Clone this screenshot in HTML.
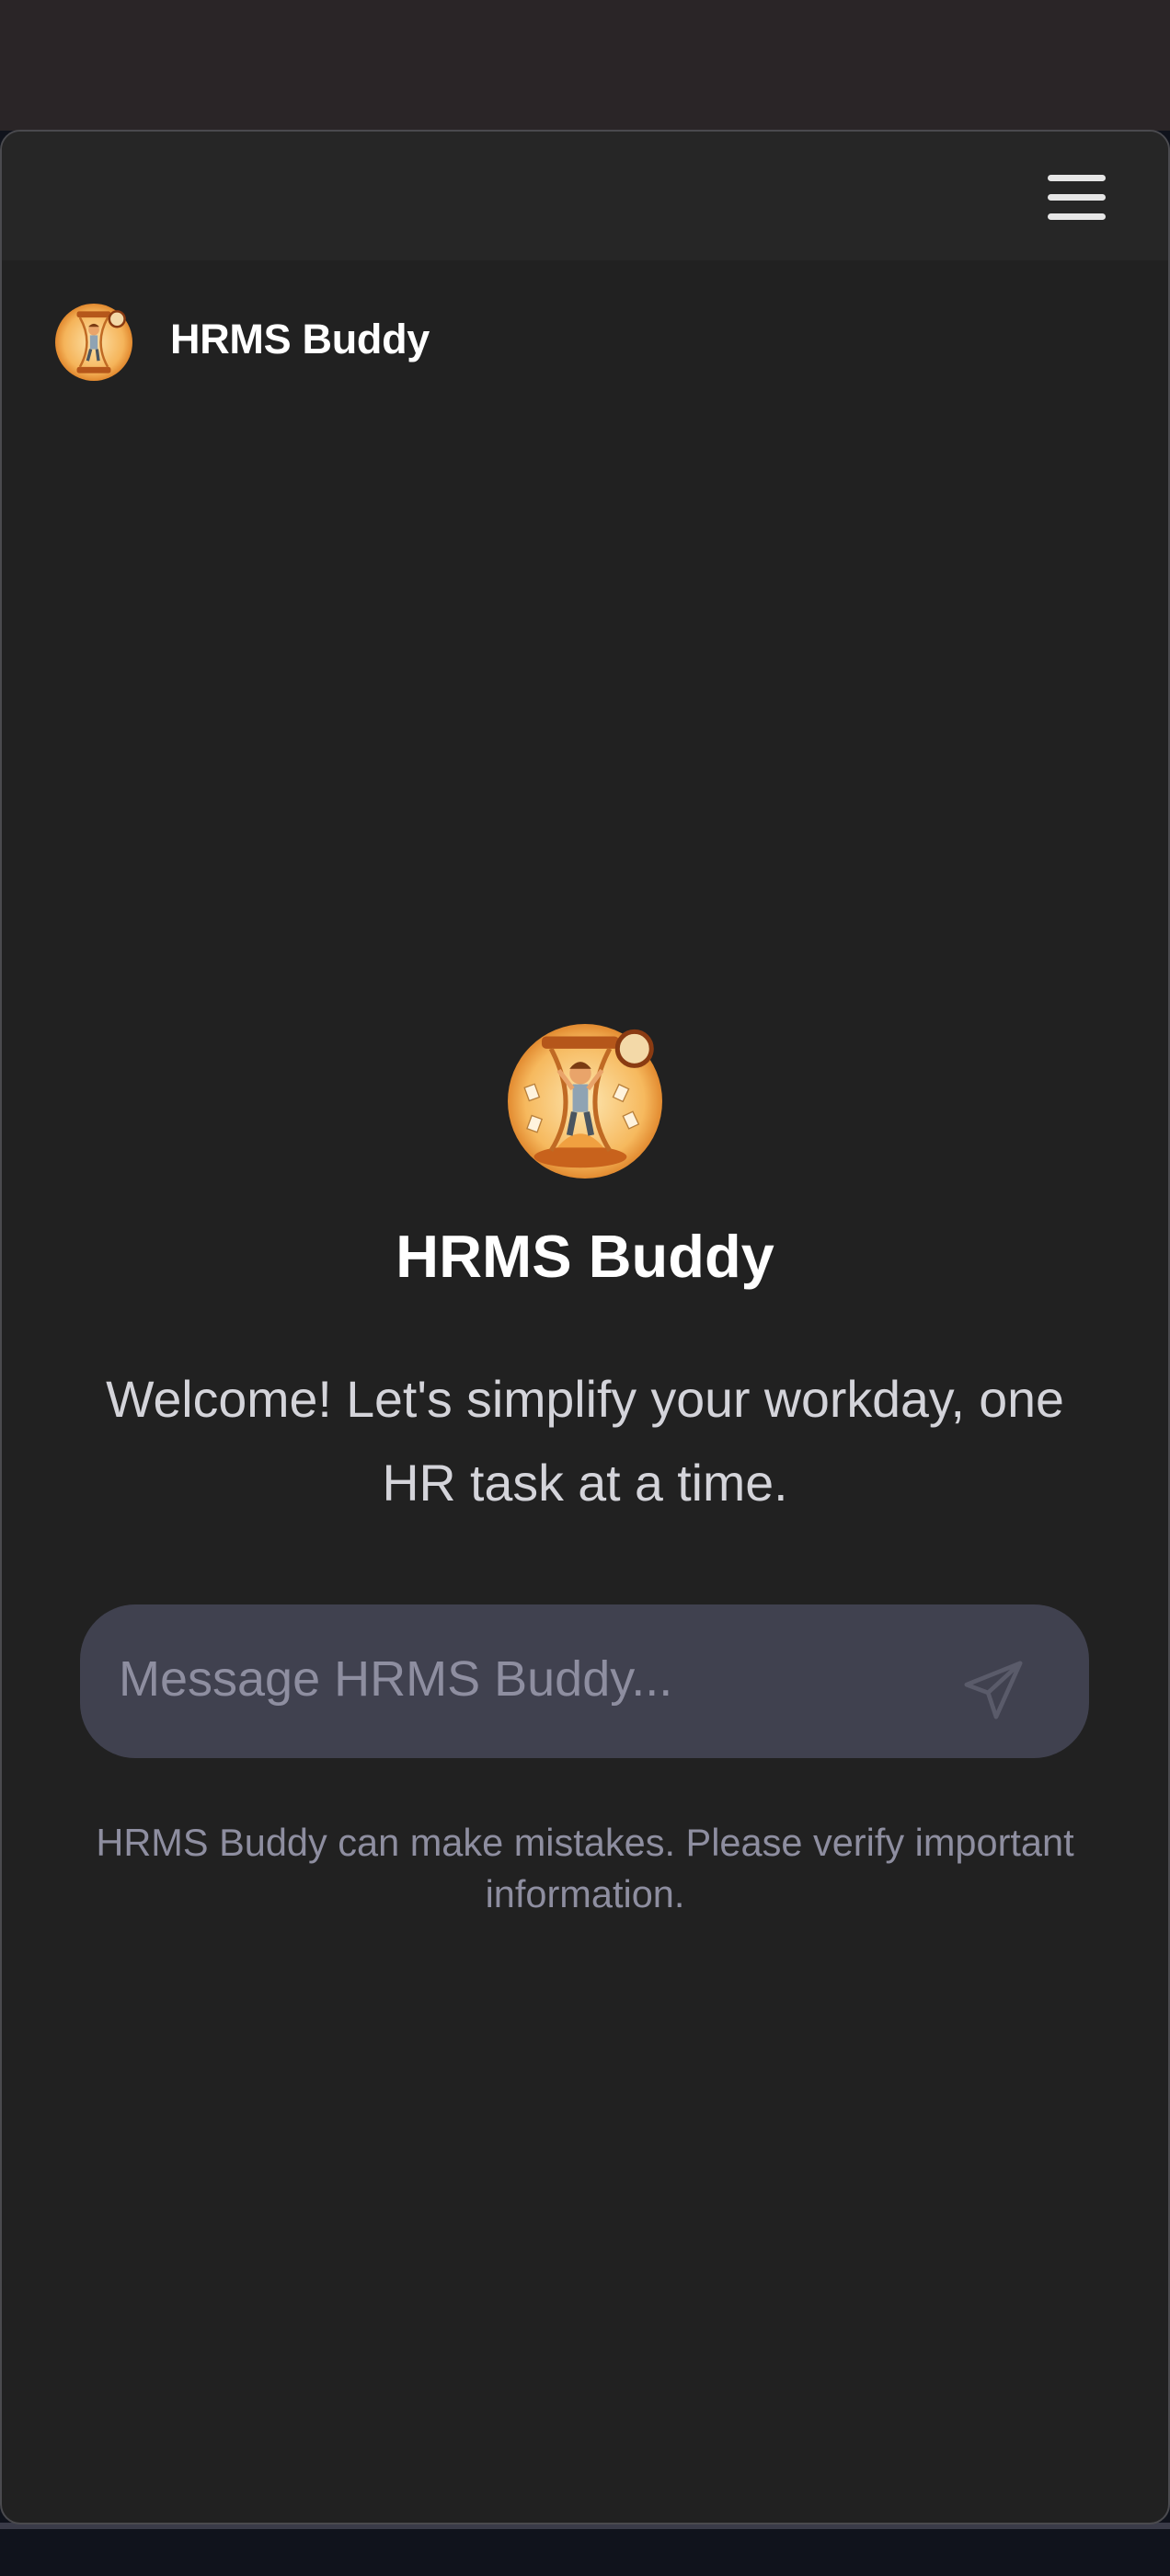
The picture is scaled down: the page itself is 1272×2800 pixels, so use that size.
<!DOCTYPE html>
<html><head><meta charset="utf-8">
<style>
*{margin:0;padding:0;box-sizing:border-box}
html,body{width:1272px;height:2800px;background:#10131c;overflow:hidden;font-family:"Liberation Sans",Arial,sans-serif}
.top{position:absolute;left:0;top:0;width:1272px;height:142px;background:#2a2527}
.panel{position:absolute;left:0;top:141px;width:1272px;height:2603px;background:#212121;border:2px solid #4a4a4e;border-radius:22px;overflow:hidden}
.bar{position:absolute;left:0;top:2742px;width:1272px;height:7px;background:#3a3b48}
.hb{position:absolute;left:1139px;width:63px;height:7px;border-radius:4px;background:#e6e6e6}
.t1{position:absolute;left:185px;top:343px;font-size:45px;font-weight:bold;color:#fff;letter-spacing:-0.3px}
.big{position:absolute;left:0;width:1272px;text-align:center;color:#fff;font-weight:bold;font-size:65px;top:1328px}
.wel{position:absolute;left:0;width:1272px;text-align:center;color:#d4d4da;font-size:55.5px;line-height:91px;top:1476px}
.inp{position:absolute;left:87px;top:1744px;width:1097px;height:167px;border-radius:60px;background:#40414f}
.ph{position:absolute;left:42px;top:50px;font-size:54px;color:#8e8ea0}
.dis{position:absolute;left:0;width:1272px;text-align:center;color:#8e8ea0;font-size:41.5px;line-height:56px;top:1975px}
</style></head><body>
<div class="top"></div>
<div class="bar"></div>
<div class="panel"></div>
<div style="position:absolute;left:0;top:0;width:1272px;height:2800px">
<div style="position:absolute;left:2px;top:143px;width:1268px;height:140px;background:#262626;border-radius:20px 20px 0 0"></div>
<div class="hb" style="top:190px"></div>
<div class="hb" style="top:211px"></div>
<div class="hb" style="top:232px"></div>

<svg style="position:absolute;left:60px;top:330px" width="84" height="84" viewBox="0 0 100 100">
<defs><radialGradient id="g1" cx="50%" cy="50%" r="55%"><stop offset="0" stop-color="#fde2a8"/><stop offset="0.7" stop-color="#f5b45a"/><stop offset="1" stop-color="#d9761c"/></radialGradient></defs>
<circle cx="50" cy="50" r="50" fill="url(#g1)"/>
<rect x="28" y="10" width="44" height="8" rx="3" fill="#b5561a"/>
<rect x="28" y="82" width="44" height="8" rx="3" fill="#b5561a"/>
<path d="M32 18 Q50 50 32 82 M68 18 Q50 50 68 82" stroke="#c06a24" stroke-width="3" fill="none"/>
<circle cx="50" cy="34" r="7" fill="#e9a46a"/><path d="M43 30 Q50 22 57 30" fill="#7a3b12"/>
<rect x="45" y="41" width="10" height="18" fill="#8fa3b3"/><path d="M46 59 L42 74 M54 59 L56 74" stroke="#4a5560" stroke-width="4"/>
<circle cx="80" cy="20" r="10" fill="#f3d9a8" stroke="#8a3b12" stroke-width="3"/>
</svg>
<div class="t1">HRMS Buddy</div>

<svg style="position:absolute;left:552px;top:1113px" width="168" height="168" viewBox="0 0 100 100">
<defs><radialGradient id="g2" cx="50%" cy="50%" r="55%"><stop offset="0" stop-color="#fde6b0"/><stop offset="0.7" stop-color="#f6b95e"/><stop offset="1" stop-color="#d9761c"/></radialGradient></defs>
<circle cx="50" cy="50" r="50" fill="url(#g2)"/>
<rect x="22" y="8" width="50" height="8" rx="3" fill="#b5561a"/>
<ellipse cx="47" cy="86" rx="30" ry="7" fill="#c8621c"/>
<path d="M28 16 Q47 52 28 82 M66 16 Q47 52 66 82" stroke="#c06a24" stroke-width="3" fill="none"/>
<path d="M32 80 Q47 62 62 80 Z" fill="#f0a040"/>
<circle cx="47" cy="32" r="7" fill="#e9a46a"/><path d="M40 29 Q47 20 54 29" fill="#7a3b12"/>
<rect x="42" y="39" width="10" height="18" fill="#8fa3b3"/><path d="M43 57 L40 72 M51 57 L54 72" stroke="#4a5560" stroke-width="4"/>
<path d="M42 42 L33 30 M52 42 L61 30" stroke="#e9a46a" stroke-width="3"/>
<circle cx="82" cy="16" r="11" fill="#f3d9a8" stroke="#8a3b12" stroke-width="3"/>
<g fill="#fff3dd" stroke="#b8803c" stroke-width="0.8"><rect x="12" y="40" width="7" height="9" transform="rotate(-20 15 44)"/><rect x="70" y="40" width="7" height="9" transform="rotate(25 73 44)"/><rect x="76" y="58" width="7" height="9" transform="rotate(-25 79 62)"/><rect x="14" y="60" width="7" height="9" transform="rotate(20 17 64)"/></g>
</svg>
<div class="big">HRMS Buddy</div>
<div class="wel">Welcome! Let's simplify your workday, one<br>HR task at a time.</div>
<div class="inp"><div class="ph">Message HRMS Buddy...</div>
<svg style="position:absolute;left:956px;top:58px" width="74" height="70" viewBox="0 0 24 24" fill="none" stroke="#5a5b6a" stroke-width="1.6" stroke-linejoin="round" stroke-linecap="round"><path d="M22 2 L2 10 L10 13 L13 22 Z M22 2 L10 13"/></svg>
</div>
<div class="dis">HRMS Buddy can make mistakes. Please verify important<br>information.</div>
</div>
</body></html>
